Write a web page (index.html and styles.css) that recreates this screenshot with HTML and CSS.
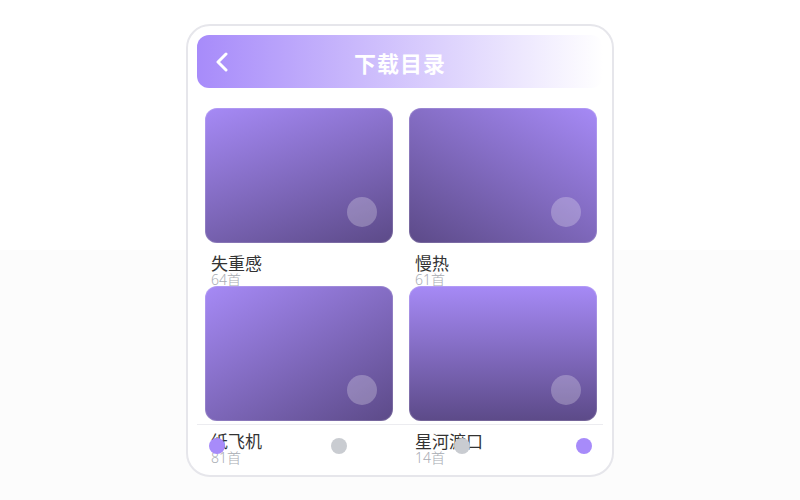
FILE: index.html
```html
<!DOCTYPE html>
<html lang="zh-CN">
<head>
  <meta charset="UTF-8" />
  <meta name="viewport" content="width=device-width, initial-scale=1.0" />
  <title>下载目录</title>
  <link rel="stylesheet" href="styles.css">
</head>
<body>
  <div class="phone">
    <!-- 顶部标题栏 -->
    <div class="header">
      <span class="back">
        <svg width="14" height="20" viewBox="0 0 14 20">
          <path d="M11 2 L3 10 L11 18" fill="none" stroke="#fff" stroke-width="3" stroke-linecap="round" stroke-linejoin="round"/>
        </svg>
      </span>
      <h1>下载目录</h1>
    </div>

    <!-- 歌单列表 -->
    <div class="grid">
      <div class="item">
        <div class="cover cover-a"><span class="play"></span></div>
        <div class="name">失重感</div>
        <div class="count">64首</div>
      </div>
      <div class="item">
        <div class="cover cover-b"><span class="play"></span></div>
        <div class="name">慢热</div>
        <div class="count">61首</div>
      </div>
      <div class="item">
        <div class="cover cover-c"><span class="play"></span></div>
        <div class="name">纸飞机</div>
        <div class="count">81首</div>
      </div>
      <div class="item">
        <div class="cover cover-d"><span class="play"></span></div>
        <div class="name">星河渡口</div>
        <div class="count">14首</div>
      </div>
    </div>

    <!-- 底部导航 -->
    <div class="tabbar">
      <span class="dot active"></span>
      <span class="dot"></span>
      <span class="dot"></span>
      <span class="dot active"></span>
    </div>
  </div>
</body>
</html>
```

FILE: styles.css
```css
body {
  margin: 0;
  padding: 0;
  min-height: 500px;
  background: linear-gradient(#ffffff 50%, #fcfcfc 50%);
  font-family: "Noto Sans", "Noto Sans CJK SC", sans-serif;
}
.phone {
  position: relative;
  width: 428px;
  height: 453px;
  margin: 24px auto 0;
  padding: 9px;
  box-sizing: border-box;
  border: 2px solid #e6e6eb;
  border-radius: 24px;
  background-color: #ffffff;
  overflow: hidden;
}
.header {
  position: relative;
  height: 53px;
  border-radius: 12px;
  background: linear-gradient(90deg, #a78bfa, #ffffff);
  display: flex;
  align-items: center;
  justify-content: center;
}
.back {
  position: absolute;
  left: 18px;
  top: 17px;
  display: flex;
}
.header h1 {
  margin: 0;
  font-size: 22px;
  font-weight: 700;
  color: #ffffff;
  font-family: "Noto Sans CJK SC", sans-serif;
  letter-spacing: 1px;
}
.grid {
  display: grid;
  grid-template-columns: 1fr 1fr;
  column-gap: 16px;
  margin: 20px 6px 0 8px;
}
.cover {
  position: relative;
  height: 135px;
  border-radius: 12px;
  box-shadow: inset 0 0 0 1px rgba(255, 255, 255, 0.15);
}
.cover-a {
  background: linear-gradient(160deg, #a68af6, #5c4a88);
}
.cover-b {
  background: linear-gradient(210deg, #a68af6, #5c4a88);
}
.cover-c {
  background: linear-gradient(150deg, #a68af6, #5c4a88);
}
.cover-d {
  background: linear-gradient(180deg, #a68af6, #5c4a88);
}
.play {
  position: absolute;
  right: 16px;
  bottom: 16px;
  width: 30px;
  height: 30px;
  border-radius: 50%;
  background-color: rgba(255, 255, 255, 0.25);
}
.name {
  margin-top: 11px;
  padding-left: 6px;
  font-size: 17px;
  line-height: 18px;
  color: #333333;
  font-family: "Noto Sans CJK SC", sans-serif;
  font-weight: 400;
}
.count {
  padding-left: 6px;
  font-size: 14px;
  line-height: 16px;
  color: #a8acb3;
  height: 14px;
  font-weight: 300;
  font-family: "Noto Sans", "Noto Sans CJK SC", sans-serif;
}
.tabbar {
  position: absolute;
  left: 9px;
  right: 9px;
  bottom: 9px;
  padding: 13px 11px 12px 12px;
  border-top: 1px solid #ececf0;
  display: flex;
  justify-content: space-between;
}
.dot {
  width: 16px;
  height: 16px;
  border-radius: 50%;
  background-color: #c9ccd1;
}
.dot.active {
  background-color: #a78bfa;
}
```
